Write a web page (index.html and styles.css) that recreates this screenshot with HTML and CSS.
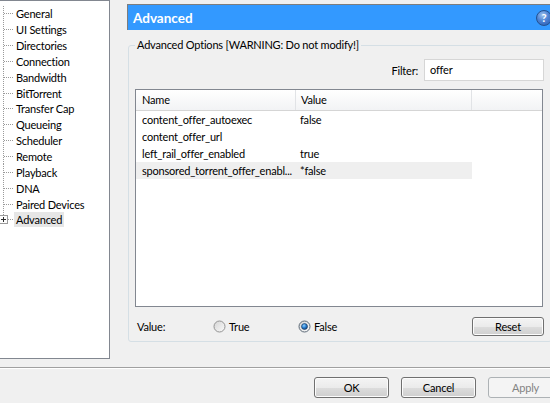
FILE: index.html
```html
<!DOCTYPE html>
<html>
<head>
<meta charset="utf-8">
<link rel="stylesheet" href="styles.css">
</head>
<body>
<div class="window">
  <div class="main">
    <div class="tree">
      <ul class="tree-list">
        <li><span class="branch"></span><span class="label">General</span></li>
        <li><span class="branch"></span><span class="label">UI Settings</span></li>
        <li><span class="branch"></span><span class="label">Directories</span></li>
        <li><span class="branch"></span><span class="label">Connection</span></li>
        <li><span class="branch"></span><span class="label">Bandwidth</span></li>
        <li><span class="branch"></span><span class="label">BitTorrent</span></li>
        <li><span class="branch"></span><span class="label">Transfer Cap</span></li>
        <li><span class="branch"></span><span class="label">Queueing</span></li>
        <li><span class="branch"></span><span class="label">Scheduler</span></li>
        <li><span class="branch"></span><span class="label">Remote</span></li>
        <li><span class="branch"></span><span class="label">Playback</span></li>
        <li><span class="branch"></span><span class="label">DNA</span></li>
        <li><span class="branch"></span><span class="label">Paired Devices</span></li>
        <li class="last"><span class="branch"><svg class="plus" width="9" height="9" viewBox="0 0 9 9"><rect x="0.5" y="0.5" width="8" height="8" fill="#fdfdfd" stroke="#9a9a9a"/><path d="M2 4.5h5M4.5 2v5" stroke="#2b2b2b" stroke-width="1"/></svg></span><span class="label selected">Advanced</span></li>
      </ul>
    </div>
    <div class="pane">
      <div class="header">
        <span class="title">Advanced</span>
        <span class="help">?</span>
      </div>
      <fieldset class="group">
        <legend>Advanced Options [WARNING: Do not modify!]</legend>
        <div class="filter-row">
          <span>Filter:</span>
          <div class="input">offer</div>
        </div>
        <div class="list">
          <div class="list-head">
            <div class="col-name">Name</div>
            <div class="col-value">Value</div>
            <div class="col-fill"></div>
          </div>
          <div class="row"><div class="col-name">content_offer_autoexec</div><div class="col-value">false</div></div>
          <div class="row"><div class="col-name">content_offer_url</div><div class="col-value"></div></div>
          <div class="row"><div class="col-name">left_rail_offer_enabled</div><div class="col-value">true</div></div>
          <div class="row hl"><div class="col-name">sponsored_torrent_offer_enabl...</div><div class="col-value">*false</div></div>
        </div>
        <div class="value-row">
          <span class="value-label">Value:</span>
          <span class="radio opt-true">
            <svg width="13" height="13" viewBox="0 0 13 13"><defs><linearGradient id="rg1" x1="0" y1="0" x2="1" y2="1"><stop offset="0" stop-color="#d4d4d4"/><stop offset="1" stop-color="#fbfbfb"/></linearGradient></defs><circle cx="6.5" cy="6.5" r="5.5" fill="url(#rg1)" stroke="#939393"/></svg>
            True
          </span>
          <span class="radio opt-false">
            <svg width="13" height="13" viewBox="0 0 13 13"><defs><linearGradient id="rg2" x1="0" y1="0" x2="1" y2="1"><stop offset="0" stop-color="#d4d4d4"/><stop offset="1" stop-color="#fbfbfb"/></linearGradient><radialGradient id="rb" cx="0.4" cy="0.35" r="0.7"><stop offset="0" stop-color="#8fd0ff"/><stop offset="0.5" stop-color="#2a7fd0"/><stop offset="1" stop-color="#0c3d78"/></radialGradient></defs><circle cx="6.5" cy="6.5" r="5.5" fill="url(#rg2)" stroke="#5d6a78"/><circle cx="6.5" cy="6.5" r="3" fill="url(#rb)" stroke="#17365c" stroke-width="0.6"/></svg>
            False
          </span>
          <span class="btn reset">Reset</span>
        </div>
      </fieldset>
    </div>
  </div>
  <div class="footer">
    <span class="btn">OK</span>
    <span class="btn">Cancel</span>
    <span class="btn disabled">Apply</span>
  </div>
</div>
</body>
</html>
```
FILE: styles.css
```css
html, body {
  margin: 0;
  padding: 0;
  background: #f0f0f0;
}
body {
  font-family: Lato, "Liberation Sans", sans-serif;
  font-size: 11px;
  letter-spacing: -0.2px;
  color: #000;
}
.window {
  width: 550px;
  height: 403px;
  overflow: hidden;
  display: flex;
  flex-direction: column;
}
.main {
  display: flex;
  height: 359px;
  flex: none;
}
.tree {
  width: 110px;
  height: 359px;
  box-sizing: border-box;
  background: #fff;
  border: 1px solid #828790;
  border-left: none;
  padding-top: 5px;
  flex: none;
}
.tree-list {
  list-style: none;
  margin: 0;
  padding: 0;
}
.tree-list li {
  display: flex;
  align-items: center;
  height: 15.85px;
}
.branch {
  width: 14px;
  height: 100%;
  flex: none;
  display: flex;
  align-items: center;
  background:
    repeating-linear-gradient(to bottom, #9a9a9a 0 1px, transparent 1px 2px) 3px 0 / 1px 100% no-repeat,
    repeating-linear-gradient(to right, #9a9a9a 0 1px, transparent 1px 2px) 4px 50% / 10px 1px no-repeat;
}
.tree-list li.last .branch {
  background:
    repeating-linear-gradient(to bottom, #9a9a9a 0 1px, transparent 1px 2px) 3px 0 / 1px 50% no-repeat,
    repeating-linear-gradient(to right, #9a9a9a 0 1px, transparent 1px 2px) 8px 50% / 6px 1px no-repeat;
}
.plus {
  margin-left: -1px;
}
.label {
  padding: 0 2px;
  line-height: 15px;
  white-space: nowrap;
}
.label.selected {
  background: #e6e6e6;
}
.pane {
  margin-left: 17px;
  width: 425px;
  flex: none;
  padding-top: 4px;
}
.header {
  height: 26px;
  box-sizing: border-box;
  background: #3399ff;
  border-top: 1px solid #7d7d7d;
  border-left: 1px solid #7d7d7d;
  display: flex;
  align-items: center;
  justify-content: space-between;
  padding-left: 5px;
  padding-right: 0;
}
.title {
  color: #fff;
  font-weight: bold;
  font-size: 13.5px;
  letter-spacing: 0;
}
.help {
  width: 16px;
  height: 16px;
  border-radius: 50%;
  box-sizing: border-box;
  border: 1px solid #24518f;
  background: radial-gradient(circle at 40% 30%, #9cc2ef 0, #4f84d4 45%, #2256ae 100%);
  color: #fff;
  font-weight: bold;
  font-size: 11px;
  line-height: 14px;
  text-align: center;
  letter-spacing: 0;
}
.group {
  margin: 8px 0 0 1px;
  width: 424px;
  box-sizing: border-box;
  border: 1px solid #d5dfe5;
  border-radius: 3px;
  padding: 0 8px 6px 6px;
  height: 304px;
}
.group legend {
  padding: 0 2px;
  line-height: 14px;
  margin-left: 0;
}
.filter-row {
  display: flex;
  justify-content: flex-end;
  align-items: center;
  gap: 6px;
  margin-top: 7px;
  height: 22px;
}
.input {
  width: 120px;
  height: 22px;
  box-sizing: border-box;
  background: #fff;
  border: 1px solid #d6d6d6;
  padding-left: 5px;
  line-height: 20px;
  margin-right: -1px;
}
.list {
  margin-top: 8px;
  width: 408px;
  height: 218px;
  box-sizing: border-box;
  border: 1px solid #828790;
  background: #fff;
}
.list-head {
  display: flex;
  height: 21px;
  box-sizing: border-box;
  border-bottom: 1px solid #d5d5d5;
  background: linear-gradient(#ffffff, #f2f3f5);
}
.list-head > div {
  line-height: 20px;
  border-right: 1px solid #e1e3e6;
}
.list-head .col-fill {
  flex: 1;
  border-right: none;
}
.col-name {
  width: 159px;
  padding-left: 6px;
  box-sizing: border-box;
  white-space: nowrap;
  overflow: hidden;
}
.col-value {
  width: 176px;
  padding-left: 5px;
  box-sizing: border-box;
}
.list-head .col-name {
  width: 160px;
}
.row {
  display: flex;
  height: 17px;
  line-height: 17px;
  width: 336px;
}
.row.hl {
  background: #efefef;
}
.value-row {
  display: flex;
  align-items: center;
  margin-top: 10px;
  height: 19px;
}
.value-label {
  padding-left: 2px;
  width: 76px;
}
.radio {
  display: flex;
  align-items: center;
  gap: 3px;
}
.opt-true {
  width: 85px;
}
.radio svg {
  flex: none;
}
.btn {
  display: inline-flex;
  align-items: center;
  justify-content: center;
  width: 75px;
  height: 21px;
  box-sizing: border-box;
  border: 1px solid #707070;
  border-radius: 3px;
  background: linear-gradient(#f4f4f4 0, #ebebeb 50%, #dddddd 51%, #cfcfcf 100%);
  box-shadow: inset 0 0 0 1px #fcfcfc;
  flex: none;
}
.reset {
  width: 72px;
  height: 19px;
  margin-left: auto;
  margin-right: -1px;
}
.footer {
  margin-top: 8px;
  border-top: 1px solid #a0a0a0;
  box-shadow: inset 0 1px 0 #ffffff;
  padding-top: 9px;
  padding-left: 314px;
  display: flex;
  gap: 12px;
  flex: none;
}
.btn.disabled {
  border-color: #adb2b5;
  background: #f4f4f4;
  color: #838383;
  box-shadow: none;
}
```
